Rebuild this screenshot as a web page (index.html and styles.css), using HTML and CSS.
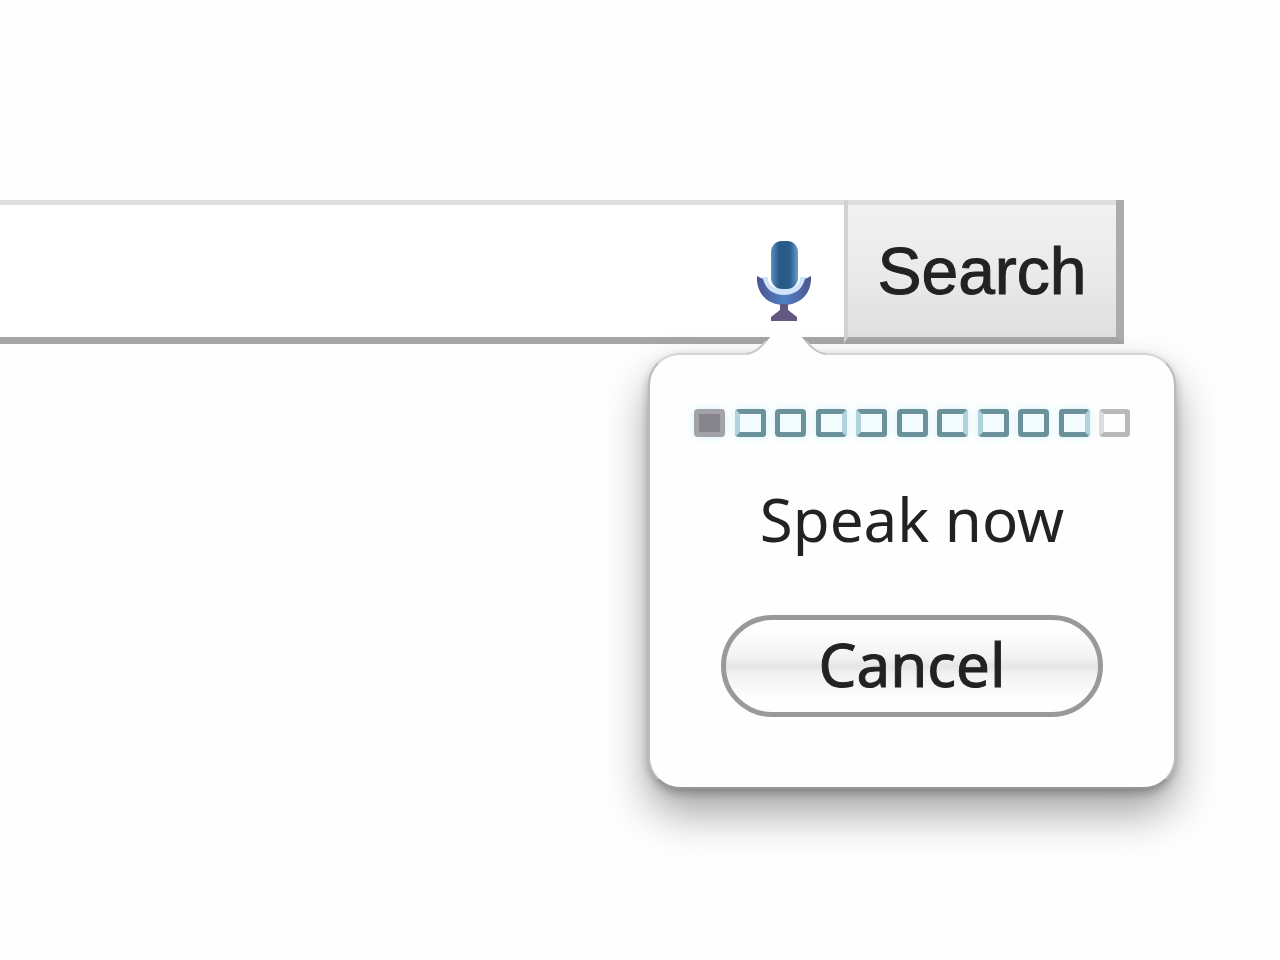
FILE: index.html
```html
<!DOCTYPE html>
<html lang="en">
<head>
    <meta charset="UTF-8">
    <meta name="viewport" content="width=device-width, initial-scale=1.0">
    <title>Voice Search</title>
    <link rel="stylesheet" href="styles.css">
</head>
<body>
    <form class="search-form">
        <div class="search-field">
            <input type="text" class="search-input" aria-label="Search text">
            <button type="button" class="mic-button" aria-label="Search by voice">
                <svg class="mic-icon" viewBox="0 0 60 84" width="60" height="84">
                    <defs>
                        <linearGradient id="capsule" x1="0" y1="0" x2="1" y2="0">
                            <stop offset="0" stop-color="#5d92c2"/>
                            <stop offset="0.3" stop-color="#285a88"/>
                            <stop offset="0.7" stop-color="#2a5c8c"/>
                            <stop offset="1" stop-color="#6a9fd0"/>
                        </linearGradient>
                        <linearGradient id="cradle" x1="0" y1="0" x2="1" y2="0">
                            <stop offset="0" stop-color="#4c5690"/>
                            <stop offset="0.5" stop-color="#5080c4"/>
                            <stop offset="1" stop-color="#4c5690"/>
                        </linearGradient>
                    </defs>
                    <path d="M11 38 V42 C13 50 20 53 30 53 S47 50 49 42 V38" fill="none" stroke="#cfe2f8" stroke-width="6"/>
                    <path d="M3 37 L9 40 C12 51 20 56 30 56 S48 51 51 40 L57 37 C58 55 46 66 30 66 S2 55 3 37 Z" fill="url(#cradle)"/>
                    <rect x="17" y="2" width="27" height="48" rx="11" fill="url(#capsule)"/>
                    <path d="M26 65 H34 V71 L43 78 V82 H17 V78 L26 71 Z" fill="#625882"/>
                </svg>
            </button>
        </div>
        <button type="button" class="search-button">Search</button>

        <div class="speech-popup" role="dialog" aria-label="Voice input">
            <svg class="popup-arrow" viewBox="0 0 80 34" width="80" height="34">
                <path d="M0 34 V32 C9 31 14 26 20 19 L32 5 Q40 -3 48 5 L60 19 C66 26 71 31 80 32 V34 Z" fill="#fefefe"/>
                <path d="M0 31 C9 30 14 25 20 18 M80 31 C71 30 66 25 60 18" fill="none" stroke="#c4c8c8" stroke-width="2"/>
            </svg>
            <div class="level-meter">
                <span class="level filled"></span>
                <span class="level open-left"></span>
                <span class="level"></span>
                <span class="level open-right"></span>
                <span class="level open-left"></span>
                <span class="level"></span>
                <span class="level open-right"></span>
                <span class="level open-left"></span>
                <span class="level"></span>
                <span class="level open-right"></span>
                <span class="level off"></span>
            </div>
            <p class="prompt">Speak now</p>
            <button type="button" class="cancel-button">Cancel</button>
        </div>
    </form>
</body>
</html>
```
FILE: styles.css
```css
body {
    box-sizing: border-box;
    min-height: 100vh;
    margin: 0;
    padding-top: 200px;
    background-color: #fefefe;
    color: #222;
    font-family: "Liberation Sans", Arial, sans-serif;
}
button {
    margin: 0;
    cursor: pointer;
}
.search-form {
    position: relative;
    display: flex;
    height: 144px;
    margin-right: 156px;
}
.search-field {
    flex: 1;
    min-width: 0;
    display: flex;
    align-items: center;
    border-top: 5px solid #dedede;
    border-bottom: 7px solid #a6a6a6;
    background-color: #fff;
}
.search-input {
    flex: 1;
    min-width: 0;
    align-self: stretch;
    padding: 0 20px;
    border: none;
    outline: none;
    background: none;
    font-size: 66px;
}
.mic-button {
    margin-right: 30px;
    padding: 20px 0 0;
    border: none;
    background: none;
}
.mic-icon {
    display: block;
}
.search-button {
    flex: none;
    width: 280px;
    padding: 4px 0 0;
    border: solid;
    border-width: 0 8px 7px 4px;
    border-color: #dedede #acacac #a6a6a6 #d2d2d2;
    background: linear-gradient(#f1f1f1, #ebebeb 50%, #dfdfdf);
    box-shadow: inset 0 5px #dedede;
    color: #222;
    font-family: inherit;
    font-size: 66px;
    -webkit-text-stroke: 1px #222;
}
.speech-popup {
    position: absolute;
    top: 153px;
    right: -52px;
    box-sizing: border-box;
    width: 528px;
    padding: 54px 44px 70px;
    border: 2px solid #bbb;
    border-top-color: #d4d6d6;
    border-bottom-color: #969696;
    border-radius: 32px;
    background-color: #fefefe;
    box-shadow: 0 24px 44px rgba(0, 0, 0, 0.36), 0 4px 10px rgba(0, 0, 0, 0.26);
    font-family: "Noto Sans", "Open Sans", sans-serif;
    text-align: center;
}
.popup-arrow {
    position: absolute;
    top: -32px;
    left: 96px;
}
.level-meter {
    display: flex;
    justify-content: space-between;
}
.level {
    box-sizing: border-box;
    width: 31px;
    height: 28px;
    border: 5px solid #6b919b;
    border-radius: 4px;
    background-color: #f2fcff;
    box-shadow: 0 0 8px #d4f3fb;
}
.open-left {
    border-left-color: #b2d2dd;
}
.open-right {
    border-right-color: #b2d2dd;
}
.filled {
    border-color: #a3a2a9;
    background-color: #85838b;
}
.off {
    border-color: #b9b9b9;
    border-left-color: #dcdcdc;
    background-color: #fefefe;
    box-shadow: none;
}
.prompt {
    margin: 40px 0 54px;
    font-size: 60px;
    line-height: 84px;
}
.cancel-button {
    width: 382px;
    height: 102px;
    padding: 0 0 4px;
    border: 5px solid #999;
    border-radius: 51px;
    background: linear-gradient(#fefefe 10%, #f3f3f3 40%, #e5e5e5 50%, #f2f2f2 60%, #fefefe 85%);
    color: #222;
    font-family: inherit;
    font-size: 60px;
    line-height: 84px;
    -webkit-text-stroke: 1px #222;
}
```
